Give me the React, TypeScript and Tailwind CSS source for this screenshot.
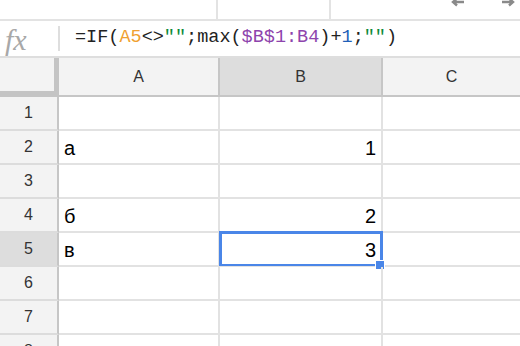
import React from "react";

const rows = [
  { n: "1", a: "", b: "" },
  { n: "2", a: "a", b: "1" },
  { n: "3", a: "", b: "" },
  { n: "4", a: "б", b: "2" },
  { n: "5", a: "в", b: "3", sel: true },
  { n: "6", a: "", b: "" },
  { n: "7", a: "", b: "" },
  { n: "8", a: "", b: "" },
];

function Arrow({ dir }: { dir: "l" | "r" }) {
  return (
    <svg width="14" height="10" viewBox="0 0 14 10" className="-mt-[2px]">
      {dir === "l" ? (
        <path d="M13 4H3M6 0.5L2 4l4 3.5" stroke="#8a8a8a" strokeWidth="2.4" fill="none" />
      ) : (
        <path d="M1 4h10M8 0.5L12 4l-4 3.5" stroke="#8a8a8a" strokeWidth="2.4" fill="none" />
      )}
    </svg>
  );
}

export default function App() {
  return (
    <div
      className="w-[520px] h-[346px] overflow-hidden bg-white flex flex-col"
      style={{ fontFamily: '"Liberation Sans", Arial, sans-serif' }}
    >
      {/* top toolbar fragment */}
      <div className="h-[21px] shrink-0 flex border-b-2 border-[#e3e3e3]">
        <div className="w-[218px] border-r-2 border-[#e3e3e3]" />
        <div className="w-[113px] border-r-2 border-[#e3e3e3]" />
        <div className="flex-1 flex items-start justify-end gap-[36px] pr-[5px]">
          <Arrow dir="l" />
          <Arrow dir="r" />
        </div>
      </div>

      {/* formula bar */}
      <div className="h-[37px] shrink-0 flex items-center border-b-2 border-[#dedede]">
        <div className="w-[58px] h-full flex items-center pl-[5px] pt-[3px]">
          <span
            className="italic text-[#a8a8a8] text-[30px] leading-none"
            style={{ fontFamily: '"Liberation Serif", "Times New Roman", serif' }}
          >
            fx
          </span>
        </div>
        <div className="w-[2px] h-[25px] bg-[#dedede]" />
        <div
          className="pl-[15px] text-[18.5px] leading-none text-[#222] whitespace-pre"
          style={{ fontFamily: '"Liberation Mono", "DejaVu Sans Mono", monospace' }}
        >
          <span>=IF(</span>
          <span className="text-[#f0a030]">A5</span>
          <span>&lt;&gt;</span>
          <span className="text-[#0d8a3a]">""</span>
          <span>;max(</span>
          <span className="text-[#8e44ad]">$B$1:B4</span>
          <span>)+</span>
          <span className="text-[#1f5fb8]">1</span>
          <span>;</span>
          <span className="text-[#0d8a3a]">""</span>
          <span>)</span>
        </div>
      </div>

      {/* grid */}
      <div className="grid grid-cols-[59px_161px_163px_1fr] auto-rows-[34px] grid-rows-[39px]">
        {/* header row */}
        <div className="bg-[#f3f3f3] border-r-[5px] border-b-[6px] border-[#c4c4c4]" />
        <div className="bg-[#f3f3f3] border-r-2 border-b-2 border-[#c6c6c6] flex items-center justify-center text-[16px] text-[#333]">
          A
        </div>
        <div className="bg-[#dddddd] border-r-2 border-b-2 border-[#c6c6c6] flex items-center justify-center text-[16px] text-[#333]">
          B
        </div>
        <div className="bg-[#f3f3f3] border-b-2 border-[#c6c6c6] flex items-center justify-center text-[16px] text-[#333]">
          C
        </div>

        {rows.map((r) => (
          <React.Fragment key={r.n}>
            <div
              className={`${r.sel ? "bg-[#dddddd]" : "bg-[#f3f3f3]"} border-r-2 border-r-[#c6c6c6] border-b-2 border-b-[#dcdcdc] flex items-center justify-center text-[16px] text-[#333]`}
            >
              {r.n}
            </div>
            <div className="border-r-2 border-b-2 border-[#e2e2e2] flex items-end pl-[5px] pb-[5px] text-[20px] leading-none text-black">
              {r.a}
            </div>
            <div className="relative border-r-2 border-b-2 border-[#e2e2e2] flex items-end justify-end pr-[5px] pb-[5px] text-[20px] leading-none text-black">
              {r.b}
              {r.sel && (
                <>
                  <div className="absolute -left-[1px] -top-[2px] -right-[2px] -bottom-[1px] border-[3px] border-b-2 border-[#4a86e8]" />
                  <div className="absolute -right-[4px] -bottom-[5px] w-[10px] h-[10px] bg-[#4a86e8] border border-white" />
                </>
              )}
            </div>
            <div className="border-b-2 border-[#e2e2e2]" />
          </React.Fragment>
        ))}
      </div>
    </div>
  );
}
